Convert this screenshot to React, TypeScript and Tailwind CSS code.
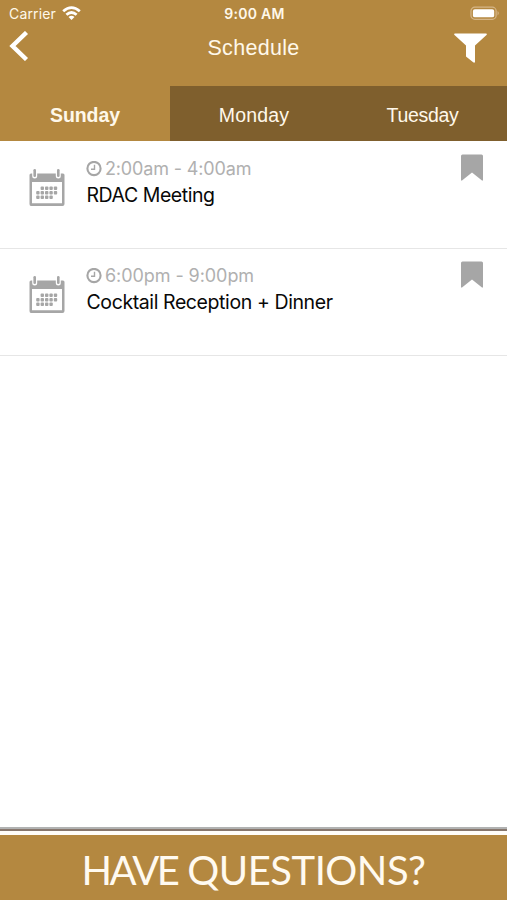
const events = [
  { time: '2:00am - 4:00am', title: 'RDAC Meeting', timeClass: 'tracking-[-0.15px]', titleClass: 'tracking-[-0.45px]' },
  { time: '6:00pm - 9:00pm', title: 'Cocktail Reception + Dinner', timeClass: 'tracking-[-0.07px]', titleClass: 'tracking-[-0.4px]' },
];

const dots = [
  [1, 0], [2, 0], [3, 0], [4, 0],
  [0, 1], [1, 1], [2, 1], [3, 1], [4, 1],
  [0, 2], [1, 2], [2, 2], [3, 2],
];

function CalendarIcon() {
  return (
    <svg className="mt-[26.5px] h-[38px] w-[36px] shrink-0" viewBox="0 0 36 38" fill="#a6a6a6">
      <path fillRule="evenodd" d="M2 4.5H34Q35.5 4.5 35.5 6V35Q35.5 37 33.5 37H2Q.5 37 .5 35V6Q.5 4.5 2 4.5ZM3 13V34.2H33V13Z" />
      <rect x="3.2" y="0" width="5" height="9.5" rx="2.5" fill="#fff" />
      <rect x="26.8" y="0" width="5" height="9.5" rx="2.5" fill="#fff" />
      <rect x="4.4" y="0" width="2.6" height="8" rx="1.3" />
      <rect x="28" y="0" width="2.6" height="8" rx="1.3" />
      {dots.map(([c, r]) => (
        <rect key={`${c}-${r}`} x={7.2 + c * 4.4} y={17.6 + r * 4.5} width="3.4" height="3.4" rx=".9" />
      ))}
    </svg>
  );
}

function EventRow({ event }: { event: (typeof events)[number] }) {
  return (
    <li className="flex h-[107px] items-start border-b border-[#e6e6e6] pr-6 pl-[28.5px]">
      <CalendarIcon />
      <div className="ml-[22px] flex-1 pt-[14px]">
        <div className="-ml-[0.5px] flex h-[26px] items-center text-[#b0b0b0]">
          <svg className="mr-[3px] h-4 w-4" viewBox="0 0 16 16" fill="none" stroke="#a6a6a6">
            <circle cx="8" cy="7.5" r="6.6" strokeWidth="2.1" />
            <path d="M8.5 3.8V8.2H5" strokeWidth="1.4" />
          </svg>
          <span className={`mb-[2px] text-[18px] whitespace-nowrap ${event.timeClass}`}>{event.time}</span>
        </div>
        <div className={`h-[27px] text-[19.5px] leading-[27px] whitespace-nowrap text-[#080808] ${event.titleClass}`}>{event.title}</div>
      </div>
      <svg className="mt-[12px] h-[27px] w-[22px]" viewBox="0 0 22 27" fill="#a6a6a6">
        <path d="M1.5 .5H20.5Q22 .5 22 2V26.5H21L11 18.5L1 26.5H0V2Q0 .5 1.5 .5Z" />
      </svg>
    </li>
  );
}

export default function App() {
  return (
    <div className="flex h-[900px] w-[507px] flex-col overflow-hidden bg-white font-['Inter',sans-serif]">
      <header className="h-[86px] bg-[#b48840] text-[#fff8ea]">
        <div className="grid h-7 grid-cols-3 items-center pr-[7px] pl-[9px]">
          <div className="flex items-center gap-[6px]">
            <span className="text-[14px] leading-7 tracking-[0.15px]">Carrier</span>
            <svg className="mb-[2px] h-[15px] w-[19px]" viewBox="0 0 19 15" fill="none" stroke="#fff" strokeWidth="2.8">
              <path d="M1.2 5.3Q9.5-2 17.8 5.3" />
              <path d="M4.4 8.8Q9.5 4.2 14.6 8.8" />
              <path d="M9.5 14L6.5 11Q9.5 8.7 12.5 11Z" fill="#fff" stroke="none" />
            </svg>
          </div>
          <div className="text-center text-[14px] leading-7 font-semibold tracking-[0.3px]">9:00 AM</div>
          <svg className="mb-[2px] h-[15px] w-[30px] justify-self-end" viewBox="0 0 31 15">
            <rect x="1" y="1" width="26" height="12.5" rx="4" fill="none" stroke="#d5b586" strokeWidth="1.3" />
            <rect x="3" y="3" width="22" height="8.5" rx="2" fill="#fff" />
            <path d="M28.5 5Q31 7.2 28.5 9.5Z" fill="#d5b586" />
          </svg>
        </div>
        <div className="grid h-10 grid-cols-3 items-center pr-5 pl-[9px]">
          <svg className="mb-[4px] h-[30px] w-5" viewBox="0 0 20 30" fill="none" stroke="#fff" strokeWidth="4.4">
            <path d="M17.5 1.5L3.5 15L17.5 28.5" />
          </svg>
          <h1 className="pl-[11px] text-center font-['Liberation_Sans',sans-serif] text-[21.5px] leading-10 tracking-[0.3px] whitespace-nowrap">Schedule</h1>
          <svg className="h-[30px] w-[33px] justify-self-end" viewBox="0 0 33 30" fill="#fff">
            <path d="M1 .5H32Q33.5 .8 32.5 2L21 12.5V29.5H19.5L12 23.5V12.5L.5 2Q-.5 .8 1 .5Z" />
          </svg>
        </div>
      </header>
      <nav className="grid h-[55px] grid-cols-[170px_168px_169px] grid-rows-[55px] bg-[#b48840] text-center font-['Liberation_Sans',sans-serif] text-[19.5px] leading-[55px] text-[#fff8ea]">
        <button className="pt-[2px] font-bold tracking-[-0.1px]">Sunday</button>
        <button className="bg-[#7f5f2d] pt-[2px] tracking-[0.2px]">Monday</button>
        <button className="bg-[#7f5f2d] pt-[2px] tracking-[-0.3px]">Tuesday</button>
      </nav>
      <ul className="flex-1 pt-px">
        {events.map((event) => (
          <EventRow key={event.title} event={event} />
        ))}
      </ul>
      <footer>
        <div className="h-[2px] bg-[#b1b2b2]" />
        <div className="h-[2px] bg-[#87776d]" />
        <div className="h-[4px] bg-[#fffdf8]" />
        <div className="h-[65px] bg-[#b48840] text-center font-['Lato',sans-serif] text-[40px] leading-[70px] whitespace-nowrap text-[#fffaf0]">
          <span className="tracking-[-2.4px]">HAVE</span>
          <span className="tracking-[-0.5px]">{' '}QUESTIONS?</span>
        </div>
      </footer>
    </div>
  );
}
